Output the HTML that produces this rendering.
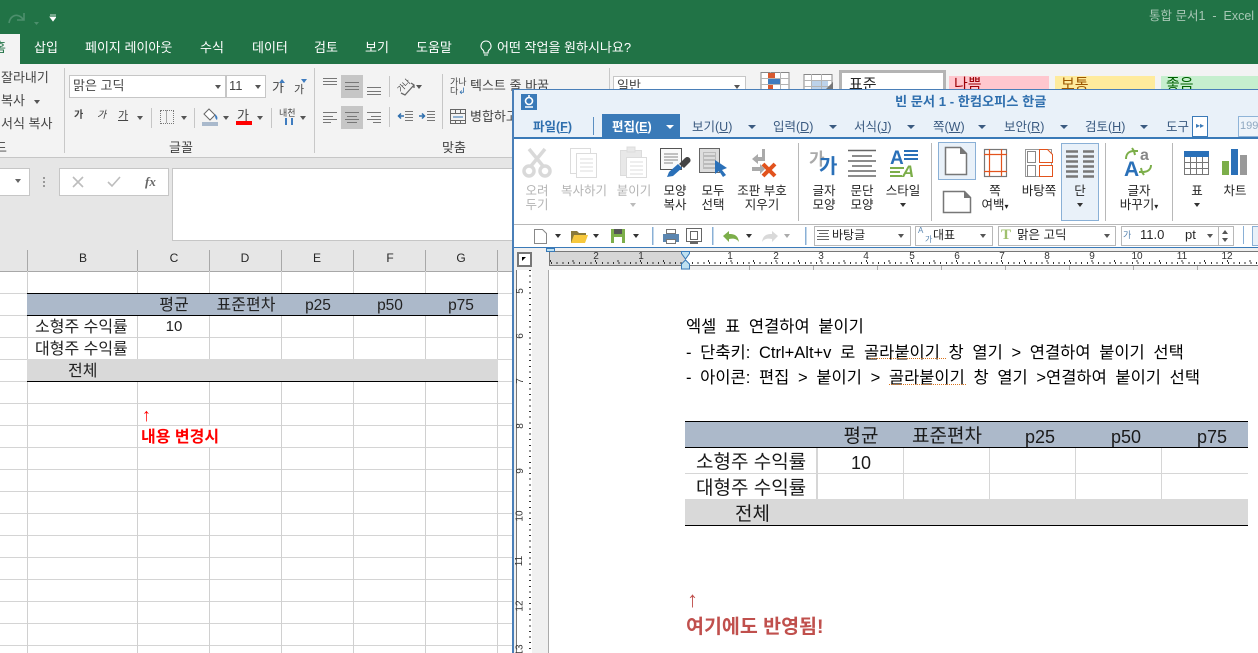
<!DOCTYPE html>
<html lang="ko"><head><meta charset="utf-8"><title>통합 문서1 - Excel</title>
<style>
html,body{margin:0;padding:0;background:#fff}
#p{position:relative;width:1258px;height:653px;overflow:hidden;font-family:"Liberation Sans","Noto Sans CJK KR",sans-serif;font-size:13px;color:#333}
#p div,#p span,#p svg{position:absolute}
#p span span{position:static}
.t{white-space:nowrap;line-height:16px}
.c{transform:translateX(-50%);text-align:center}
.l{color:#444}
.w{color:#fff;font-size:13px}
.g{color:#b4b4b4;font-size:12.500px}
.m{color:#3a5a80;font-size:12.500px}
.b{color:#2f6fae}
.d{color:#262626;font-size:12.500px}
.s{color:#444;font-size:12.500px}
.tri{width:0;height:0;border-left:3.5px solid transparent;border-right:3.5px solid transparent;border-top:4px solid #555}
.tb{width:0;height:0;border-left:4px solid transparent;border-right:4px solid transparent;border-top:4px solid #3a5a80}
.dl{color:#000;font-size:16.500px;word-spacing:4.100px;line-height:20px}
.h{color:#222;font-size:16px;line-height:18px}
.k{color:#1a1a1a;font-size:19px;line-height:22px}
.r{font-size:10px;color:#333;line-height:10px}
</style></head><body><div id="p">

<!-- EXCEL -->
<div style="left:0;top:0;width:1258px;height:64px;background:#217346"></div>
<svg style="left:6px;top:8px" width="50" height="20"><path d="M3 15c1-6 6-10 12-6l3 3M18 5v7h-7" fill="none" stroke="#4d8f6d" stroke-width="1.600"/><path d="M28 14h5l-2.500 3z" fill="#4d8f6d"/><path d="M44 7h6M44 9h6l-3 4z" fill="#fff" stroke="#fff" stroke-width=".8"/></svg>
<span class="t" style="left:1149px;top:8px;color:#a7c7b5;font-size:12.500px">통합 문서1&nbsp; - &nbsp;Excel</span>
<div style="left:0;top:34px;width:20px;height:30px;background:#f3f3f3"></div>
<span class="t" style="left:-6px;top:40px;color:#217346;font-size:13px">홈</span>
<span class="t w" style="left:34px;top:40px">삽입</span>
<span class="t w" style="left:85px;top:40px">페이지 레이아웃</span>
<span class="t w" style="left:200px;top:40px">수식</span>
<span class="t w" style="left:252px;top:40px">데이터</span>
<span class="t w" style="left:314px;top:40px">검토</span>
<span class="t w" style="left:365px;top:40px">보기</span>
<span class="t w" style="left:416px;top:40px">도움말</span>
<svg style="left:479px;top:40px" width="14" height="17"><path d="M7 1a5 5 0 0 0-3 9c.7.6 1 1.400 1 3h4c0-1.600.3-2.400 1-3A5 5 0 0 0 7 1zM5 15h4" fill="none" stroke="#fff" stroke-width="1.100"/></svg>
<span class="t w" style="left:497px;top:40px">어떤 작업을 원하시나요?</span>

<div style="left:0;top:64px;width:1258px;height:93px;background:#f3f3f3;border-bottom:1px solid #c6c6c6"></div>
<div style="left:64px;top:68px;width:1px;height:85px;background:#c8c8c8"></div>
<div style="left:314px;top:68px;width:1px;height:85px;background:#c8c8c8"></div>
<div style="left:609px;top:68px;width:1px;height:85px;background:#c8c8c8"></div>
<span class="t l" style="left:1px;top:70px">잘라내기</span>
<span class="t l" style="left:1px;top:93px">복사</span><div class="tri" style="left:34px;top:100px"></div>
<span class="t l" style="left:1px;top:116px">서식 복사</span>
<span class="t l" style="left:-5px;top:140px">드</span>
<span class="t l" style="left:169px;top:140px">글꼴</span>
<span class="t l" style="left:442px;top:140px">맞춤</span>
<div style="left:69px;top:75px;width:155px;height:21px;background:#fff;border:1px solid #c6c6c6"></div>
<div style="left:226px;top:75px;width:38px;height:21px;background:#fff;border:1px solid #c6c6c6"></div>
<span class="t l" style="left:73px;top:78px">맑은 고딕</span>
<span class="t l" style="left:229px;top:78px">11</span>
<div class="tri" style="left:215px;top:85px"></div><div class="tri" style="left:255px;top:85px"></div>
<span class="t l" style="left:272px;top:80px;font-size:13px">가</span><span class="t l" style="left:294px;top:82px;font-size:11px">가</span>
<div class="tri" style="left:279px;top:79px;transform:rotate(180deg);border-top-color:#3f7cbf"></div>
<div class="tri" style="left:301px;top:79px;border-top-color:#3f7cbf"></div>
<span class="t l" style="left:74px;top:108px;font-size:10px;font-weight:700">가</span>
<span class="t l" style="left:97px;top:108px;font-size:10px;font-style:italic">가</span>
<span class="t l" style="left:118px;top:108px;font-size:11px;text-decoration:underline">가</span>
<div class="tri" style="left:137px;top:116px"></div>
<div style="left:151px;top:108px;width:1px;height:20px;background:#c6c6c6"></div>
<div style="left:160px;top:110px;width:12px;height:12px;border:1px dotted #777"></div>
<div style="left:166px;top:110px;width:1px;height:13px;background:#aaa"></div>
<div class="tri" style="left:181px;top:116px"></div>
<div style="left:194px;top:108px;width:1px;height:20px;background:#c6c6c6"></div>
<svg style="left:201px;top:108px" width="18" height="18"><path d="M8 1l6 6-5 5-6-6z" fill="#fff" stroke="#666"/><path d="M14 6c2 2 3 3 2 6-2-1-2-4-2-6z" fill="#3f7cbf"/><rect x="1" y="14" width="16" height="4" fill="#a9b9cc"/></svg>
<div class="tri" style="left:223px;top:116px"></div>
<span class="t l" style="left:237px;top:108px;font-size:13px">가</span>
<div style="left:236px;top:121px;width:16px;height:4px;background:#f00"></div>
<div class="tri" style="left:257px;top:116px"></div>
<div style="left:271px;top:108px;width:1px;height:20px;background:#c6c6c6"></div>
<span class="t l" style="left:279px;top:108px;font-size:9px;line-height:10px">내천</span>
<div style="left:285px;top:118px;width:8px;height:7px;border-left:2px solid #3f7cbf;border-right:2px solid #3f7cbf;box-sizing:border-box"></div>
<div class="tri" style="left:300px;top:116px"></div>

<div style="left:341px;top:75px;width:22px;height:23px;background:#c6c6c6"></div>
<div style="left:341px;top:106px;width:22px;height:23px;background:#c6c6c6"></div>
<svg style="left:322px;top:74px" width="64" height="52" fill="none" stroke="#777"><path d="M1 4.500h14M1 7.500h14M1 10.500h14M23 8.500h14M23 12.500h14M23 15.500h14M45 13.500h14M45 17.500h14M45 20.500h14M1 38.500h14M1 42.500h10M1 45.500h14M1 48.500h8M23 38.500h14M25 42.500h10M23 45.500h14M25 48.500h10M45 38.500h14M49 42.500h10M45 45.500h14M51 48.500h8"/></svg>
<div style="left:389px;top:76px;width:1px;height:21px;background:#c6c6c6"></div>
<div style="left:389px;top:107px;width:1px;height:20px;background:#c6c6c6"></div>
<div style="left:442px;top:74px;width:1px;height:55px;background:#c6c6c6"></div>
<span class="t l" style="left:397px;top:81px;font-size:8px;line-height:10px;transform:rotate(-45deg)">가나</span>
<svg style="left:396px;top:77px" width="20" height="20"><path d="M5 16l4 2L18 8M15 6l3 2 0 3" stroke="#666" stroke-width="1.300" fill="none"/></svg>
<div class="tri" style="left:416px;top:85px"></div>
<svg style="left:397px;top:110px" width="40" height="13"><path d="M8 1.500h8M8 4.500h8M8 7.500h8M8 10.500h8M30 1.500h8M30 4.500h8M30 7.500h8M30 10.500h8M0 .5" stroke="#777"/><path d="M7 6H1M4 3.500L1.500 6 4 8.500M22 6h6M25 3.500L27.500 6 25 8.500" stroke="#2f6fae" stroke-width="1.500" fill="none"/></svg>
<span class="t l" style="left:450px;top:78px;font-size:9px;line-height:9px">가나<br>다<span style="color:#2f6fae">↲</span></span>
<span class="t l" style="left:470px;top:78px">텍스트 줄 바꿈</span>
<svg style="left:450px;top:109px" width="16" height="15" fill="none" stroke="#666"><rect x=".5" y=".5" width="15" height="14"/><path d="M1 4.500h14M1 11.500h14M5.500 .5v4M10.500 .5v4M5.500 11v4M10.500 11v4"/><path d="M3 8h10" stroke="#2f6fae"/></svg>
<span class="t l" style="left:470px;top:109px">병합하고 가운데 맞춤</span>

<div style="left:613px;top:76px;width:131px;height:22px;background:#fff;border:1px solid #c6c6c6"></div>
<span class="t l" style="left:617px;top:78px">일반</span><div class="tri" style="left:734px;top:85px"></div>
<svg style="left:760px;top:70px" width="76" height="20" fill="none"><rect x="1" y="2.500" width="28" height="20" fill="#fff" stroke="#888"/><path d="M1 8.500h28M1 14.500h28M10.500 2v20M20.500 2v20" stroke="#b4b4b4"/><rect x="8" y="3" width="7" height="5" fill="#d85a30"/><rect x="8" y="9" width="12" height="5" fill="#3f7cbf"/><rect x="8" y="15" width="5" height="5" fill="#d85a30"/><rect x="44" y="4.500" width="28" height="18" fill="#fff" stroke="#888"/><rect x="51" y="10" width="17" height="10" fill="#bcd2ea"/><path d="M44 10.500h28M44 16.500h28M51.500 4v18M61.500 4v18" stroke="#b4b4b4"/><path d="M65 20l8-8v8z" fill="#777"/></svg>
<div style="left:839px;top:70px;width:101px;height:24px;background:#fff;border:3px solid #b4b4b4"></div>
<span class="t d" style="left:849px;top:77px;font-size:15px">표준</span>
<div style="left:949px;top:76px;width:100px;height:20px;background:#ffc7ce"></div>
<span class="t" style="left:954px;top:77px;color:#9c0006;font-size:15px">나쁨</span>
<div style="left:1055px;top:76px;width:100px;height:20px;background:#ffeb9c"></div>
<span class="t" style="left:1061px;top:77px;color:#9c5700;font-size:15px">보통</span>
<div style="left:1161px;top:76px;width:97px;height:20px;background:#c6efce"></div>
<span class="t" style="left:1166px;top:77px;color:#006100;font-size:15px">좋음</span>

<!-- formula bar -->
<div style="left:0;top:158px;width:520px;height:113px;background:#e6e6e6"></div>
<div style="left:-2px;top:168px;width:30px;height:26px;background:#fff;border:1px solid #c6c6c6"></div>
<div class="tri" style="left:15px;top:179px;border-top-color:#666"></div>
<div style="left:43px;top:177px;width:2px;height:10px;border-left:2px dotted #999"></div>
<div style="left:59px;top:168px;width:108px;height:26px;background:#fff;border:1px solid #c6c6c6"></div>
<svg style="left:72px;top:175px" width="50" height="14" fill="none" stroke="#bdbdbd" stroke-width="1.600"><path d="M1 2l10 10M11 2L1 12M36 7l4 4 8-9" /></svg>
<span class="t" style="left:145px;top:174px;font-family:'Liberation Serif',serif;font-style:italic;font-weight:700;font-size:13px;color:#666">fx</span>
<div style="left:172px;top:168px;width:348px;height:71px;background:#fff;border:1px solid #c6c6c6"></div>

<!-- grid -->
<div style="left:0;top:250px;width:512px;height:21px;background:#e6e6e6;border-bottom:1px solid #a8a8a8"></div>
<div style="left:0;top:272px;width:512px;height:381px;background-color:#fff;background-image:repeating-linear-gradient(to bottom,transparent 0,transparent 21px,#d4d4d4 21px,#d4d4d4 22px)"></div>
<div style="left:27px;top:250px;width:1px;height:403px;background:#d0d0d0"></div>
<div style="left:137px;top:250px;width:1px;height:403px;background:#d0d0d0"></div>
<div style="left:209px;top:250px;width:1px;height:403px;background:#d0d0d0"></div>
<div style="left:281px;top:250px;width:1px;height:403px;background:#d0d0d0"></div>
<div style="left:353px;top:250px;width:1px;height:403px;background:#d0d0d0"></div>
<div style="left:425px;top:250px;width:1px;height:403px;background:#d0d0d0"></div>
<div style="left:497px;top:250px;width:1px;height:403px;background:#d0d0d0"></div>
<div style="left:27px;top:250px;width:471px;height:21px;background-image:linear-gradient(#a8a8a8,#a8a8a8),linear-gradient(#a8a8a8,#a8a8a8),linear-gradient(#a8a8a8,#a8a8a8),linear-gradient(#a8a8a8,#a8a8a8),linear-gradient(#a8a8a8,#a8a8a8),linear-gradient(#a8a8a8,#a8a8a8),linear-gradient(#a8a8a8,#a8a8a8);background-size:1px 21px;background-repeat:no-repeat;background-position:0 0,110px 0,182px 0,254px 0,326px 0,398px 0,470px 0"></div>
<span class="t c d" style="left:83px;top:250px;font-size:12px">B</span><span class="t c d" style="left:174px;top:250px;font-size:12px">C</span><span class="t c d" style="left:245px;top:250px;font-size:12px">D</span><span class="t c d" style="left:317px;top:250px;font-size:12px">E</span><span class="t c d" style="left:390px;top:250px;font-size:12px">F</span><span class="t c d" style="left:461px;top:250px;font-size:12px">G</span>
<div style="left:27px;top:293px;width:471px;height:23px;background:#acb9ca;border-top:1px solid #000;border-bottom:1px solid #000;box-sizing:border-box"></div>
<div style="left:27px;top:359px;width:471px;height:23px;background:#d9d9d9;border-bottom:1px solid #000;box-sizing:border-box"></div>
<div style="left:138px;top:426px;width:72px;height:21px;background:#fff"></div>
<span class="t c h" style="left:174px;top:297px">평균</span><span class="t c h" style="left:246px;top:297px">표준편차</span><span class="t c h" style="left:318px;top:297px;font-size:15.500px">p25</span><span class="t c h" style="left:390px;top:297px;font-size:15.500px">p50</span><span class="t c h" style="left:461px;top:297px;font-size:15.500px">p75</span>
<span class="t h" style="left:35px;top:319px">소형주 수익률</span><span class="t c h" style="left:174px;top:318px;font-size:15px">10</span>
<span class="t h" style="left:35px;top:341px">대형주 수익률</span>
<span class="t h" style="left:68px;top:363px">전체</span>
<span class="t" style="left:142px;top:405px;color:#f00;font-size:18px;line-height:20px">↑</span>
<span class="t" style="left:141px;top:429px;color:#f00;font-size:16px;font-weight:700;line-height:18px">내용 변경시</span>

<!-- HANCOM WINDOW -->
<div style="left:512px;top:89px;width:746px;height:564px;background:#fff;border-left:2px solid #4a7fb8;border-top:1px solid #4a7fb8;box-sizing:border-box"></div>
<div style="left:514px;top:90px;width:744px;height:49px;background:#e9f1f9;border-bottom:2px solid #3a7ab8;box-sizing:border-box"></div>
<svg style="left:521px;top:94px" width="16" height="16"><rect width="16" height="16" fill="#3a7ab8"/><circle cx="8" cy="7" r="3.500" fill="none" stroke="#fff" stroke-width="1.600"/><path d="M4 13h8M8 1v2" stroke="#fff" stroke-width="1.600"/></svg>
<span class="t b" style="left:895px;top:94px;font-weight:700;font-size:13.200px">빈 문서 1 - 한컴오피스 한글</span>
<span class="t b" style="left:533px;top:119px;font-weight:700;font-size:12.500px">파일(<u>F</u>)</span>
<div style="left:593px;top:117px;width:1px;height:18px;background:#5b8fc2"></div>
<div style="left:602px;top:114px;width:78px;height:24px;background:#3a7ab8"></div>
<span class="t" style="left:612px;top:119px;color:#fff;font-weight:700;font-size:12.500px">편집(<u>E</u>)</span>
<div class="tb" style="left:666px;top:125px;border-top-color:#fff"></div>
<span class="t m" style="left:692px;top:119px">보기(<u>U</u>)</span><div class="tb" style="left:748px;top:125px"></div>
<span class="t m" style="left:773px;top:119px">입력(<u>D</u>)</span><div class="tb" style="left:829px;top:125px"></div>
<span class="t m" style="left:854px;top:119px">서식(<u>J</u>)</span><div class="tb" style="left:907px;top:125px"></div>
<span class="t m" style="left:933px;top:119px">쪽(<u>W</u>)</span><div class="tb" style="left:978px;top:125px"></div>
<span class="t m" style="left:1004px;top:119px">보안(<u>R</u>)</span><div class="tb" style="left:1060px;top:125px"></div>
<span class="t m" style="left:1085px;top:119px">검토(<u>H</u>)</span><div class="tb" style="left:1140px;top:125px"></div>
<span class="t m" style="left:1166px;top:119px">도구</span>
<div style="left:1192px;top:116px;width:14px;height:19px;background:#fff;border:1px solid #3a7ab8;color:#3a7ab8;font-size:8px;line-height:17px;text-align:center">▸▸</div>
<div style="left:1238px;top:116px;width:20px;height:19px;border:1px solid #8fb4d8;background:#eef4fa;color:#8fa8c0;font-size:11px;line-height:19px;padding-left:1px;overflow:hidden">199</div>

<!-- ribbon icons -->
<svg style="left:514px;top:140px" width="744" height="84">
<g fill="none" stroke="#d9d9d9" stroke-width="3.500"><path d="M15 9l14 17M31 9L17 26"/><circle cx="15" cy="31" r="5"/><circle cx="31" cy="31" r="5"/></g>
<g fill="#fff" stroke="#dcdcdc"><rect x="56.500" y="8.500" width="20" height="25"/><rect x="62.500" y="13.500" width="20" height="24"/><path d="M66 19h13M66 23h13M66 27h13M66 31h13" /></g>
<g fill="#e8e8e8" stroke="#dcdcdc"><rect x="106.500" y="10.500" width="21" height="25"/><rect x="113" y="7" width="8" height="5"/><rect x="112.500" y="17.500" width="20" height="20" fill="#fff"/><path d="M116 22h13M116 26h13M116 30h13M116 34h13"/></g>
<rect x="146.500" y="8.500" width="21" height="21" fill="#fafafa" stroke="#555"/><path d="M150 14h14M150 17h14M150 20h14M150 23h9" stroke="#888"/>
<path d="M153 37l2-5 9-8 4 4-9 8z" fill="#2a70b8"/><path d="M165 24l6-6c3-3 7 1 5 4l-6 6z" fill="#444"/>
<rect x="185.500" y="8.500" width="20" height="24" fill="#ddd" stroke="#666"/><rect x="189" y="12" width="13" height="17" fill="#bbb"/><path d="M190 14h11M190 18h11M190 22h11M190 26h11" stroke="#fff"/>
<path d="M201 20v14l4-3 4 6 3-2-4-5 5-2z" fill="#2a70b8"/>
<g fill="#aaa"><path d="M248 9h3v12h-7v3l-6-5 6-5v3h4zM238 27h8v-3l5 5-5 5v-3h-8z"/></g>
<path d="M249 24l12 12m0-12l-12 12" stroke="#e2531d" stroke-width="4"/>
<rect x="284" y="3" width="1" height="78" fill="#b8b8b8"/>
<text x="295" y="25" font-size="17" fill="#aaa" font-weight="700" font-family="Noto Sans CJK KR">가</text>
<text x="305" y="33" font-size="20" fill="#2a70b8" font-weight="700" font-family="Noto Sans CJK KR">가</text>
<path d="M334 10.500h28M338 16h20M334 21h28M338 26h20M334 31h28M334 36h28" stroke="#666" stroke-width="1.500"/>
<text x="376" y="24" font-size="19" fill="#2a70b8" font-weight="700" font-family="Liberation Sans">A</text>
<path d="M390 11h14M390 15h14M390 19h14" stroke="#2a70b8" stroke-width="2"/>
<path d="M376 28h14M376 32h10M376 36h12" stroke="#7cae4a" stroke-width="2"/>
<text x="388" y="37" font-size="17" fill="#7cae4a" font-weight="700" font-style="italic" font-family="Liberation Sans">A</text>
<rect x="417" y="3" width="1" height="78" fill="#b8b8b8"/>
<rect x="424.500" y="2.500" width="37" height="37" fill="#e9f1f9" stroke="#8ab0d6"/>
<path d="M431.500 7.500h15l6 6v21h-21z" fill="#fff" stroke="#777" stroke-width="1.500"/><path d="M446 7l7 7h-7z" fill="#777"/>
<path d="M429.500 51.500h21l6 6v15h-27z" fill="#fff" stroke="#777" stroke-width="1.500"/><path d="M450 51l7 7h-7z" fill="#777"/>
<rect x="470.500" y="9.500" width="22" height="27" fill="#fff" stroke="#777" stroke-width="1.200"/><path d="M470 14.500h23M470 31.500h23M475.500 9v27M487.500 9v27" stroke="#e2531d" stroke-width="1.200"/>
<path d="M511.500 9.500h26v27h-26z" fill="#fff" stroke="#999"/><path d="M513.500 11.500h8v11h-8zM513.500 25.500h8v11h-8z" fill="none" stroke="#888"/><path d="M525.500 9.500h8l5 5v8h-13zM525.500 25.500h13v11h-13z" fill="#fff" stroke="#e2531d"/>
<rect x="547.500" y="3.500" width="37" height="77" fill="#e9f1f9" stroke="#8ab0d6"/>
<path d="M552 11.500h12M569 11.500h11M552 16.500h12M569 16.500h11M552 21.500h12M569 21.500h11M552 26.500h12M569 26.500h11M552 31.500h12M569 31.500h11M552 36.500h12M569 36.500h11" stroke="#777" stroke-width="2.500"/>
<rect x="591" y="3" width="1" height="78" fill="#b8b8b8"/>
<text x="610" y="36" font-size="21" fill="#2a70b8" font-weight="700" font-family="Liberation Sans">A</text>
<text x="626" y="20" font-size="16" fill="#888" font-weight="700" font-family="Liberation Sans">a</text>
<path d="M612 19c0-5 3-8 8-8l-2-3M624 11l-4 0 1 4M637 25c0 5-4 7-9 7l2 3M625 32l3 0-1-4" fill="none" stroke="#7cae4a" stroke-width="2"/>
<rect x="658" y="3" width="1" height="78" fill="#b8b8b8"/>
<rect x="670.500" y="11.500" width="24" height="23" fill="#fff" stroke="#777"/><rect x="670" y="11" width="25" height="6" fill="#2a70b8"/><path d="M670 22.500h25M670 28.500h25M676.500 17v18M682.500 17v18M688.500 17v18" stroke="#777"/>
<rect x="708" y="21" width="7" height="14" fill="#7cae4a"/><rect x="717" y="9" width="7" height="26" fill="#2a70b8"/><rect x="726" y="15" width="7" height="20" fill="#999"/>
</svg>
<div style="left:514px;top:224px;width:744px;height:1px;background:#b8b8b8"></div>
<span class="t c g" style="left:537px;top:184px;line-height:14px">오려<br>두기</span>
<span class="t c g" style="left:584px;top:184px;line-height:14px">복사하기</span>
<span class="t c g" style="left:634px;top:184px;line-height:14px">붙이기</span><div class="tri" style="left:630px;top:203px;border-top-color:#bbb"></div>
<span class="t c d" style="left:675px;top:184px;line-height:14px">모양<br>복사</span>
<span class="t c d" style="left:713px;top:184px;line-height:14px">모두<br>선택</span>
<span class="t c d" style="left:762px;top:184px;line-height:14px">조판 부호<br>지우기</span>
<span class="t c d" style="left:824px;top:184px;line-height:14px">글자<br>모양</span>
<span class="t c d" style="left:862px;top:184px;line-height:14px">문단<br>모양</span>
<span class="t c d" style="left:903px;top:184px;line-height:14px">스타일</span><div class="tri" style="left:900px;top:203px;border-top-color:#333"></div>
<span class="t c d" style="left:995px;top:184px;line-height:14px">쪽<br>여백<span style="font-size:8px">▾</span></span>
<span class="t c d" style="left:1039px;top:184px;line-height:14px">바탕쪽</span>
<span class="t c d" style="left:1080px;top:184px;line-height:14px">단</span><div class="tri" style="left:1077px;top:203px;border-top-color:#333"></div>
<span class="t c d" style="left:1139px;top:184px;line-height:14px">글자<br>바꾸기<span style="font-size:8px">▾</span></span>
<span class="t c d" style="left:1197px;top:184px;line-height:14px">표</span><div class="tri" style="left:1194px;top:203px;border-top-color:#333"></div>
<span class="t c d" style="left:1235px;top:184px;line-height:14px">차트</span>

<!-- toolbar -->
<svg style="left:514px;top:225px" width="380" height="22">
<path d="M20.500 4.500h8l4 4v10h-12z" fill="#fff" stroke="#888"/><path d="M41 9h6l-3 4z" fill="#333"/>
<path d="M57 6h6l2 2h7v3H61l-2 7h-2z" fill="#8a7a3a"/><path d="M60 10h14l-3 8H57z" fill="#f7c83c"/>
<path d="M79 9h6l-3 4z" fill="#333"/>
<rect x="97" y="4" width="14" height="14" fill="#7cae4a"/><rect x="100" y="4" width="8" height="5" fill="#555"/><rect x="100" y="12" width="8" height="6" fill="#fff"/>
<path d="M119 9h6l-3 4z" fill="#333"/>
<rect x="138" y="2" width="1.500" height="18" fill="#8ab0d6"/>
<rect x="149" y="9" width="16" height="8" fill="#5b86b0"/><rect x="152.500" y="4.500" width="9" height="4" fill="#fff" stroke="#777"/><rect x="152.500" y="14.500" width="9" height="4" fill="#fff" stroke="#777"/>
<rect x="172.500" y="3.500" width="15" height="13" fill="#fff" stroke="#666"/><rect x="176.500" y="6.500" width="7" height="8" fill="#fff" stroke="#666"/><rect x="176" y="17" width="8" height="2" fill="#666"/>
<rect x="198" y="2" width="1.500" height="18" fill="#8ab0d6"/>
<path d="M209 11l6-5v3c5 0 9 1 10 8-2-3-5-4-10-3v3z" fill="#7cae4a"/><path d="M232 9h6l-3 4z" fill="#333"/>
<path d="M264 11l-6-5v3c-5 0-9 1-10 8 2-3 5-4 10-3v3z" fill="#d9d9d9"/><path d="M270 9h6l-3 4z" fill="#aaa"/>
<rect x="291" y="2" width="1.500" height="18" fill="#8ab0d6"/>
</svg>
<div style="left:514px;top:247px;width:744px;height:1px;background:#3a7ab8"></div>
<div style="left:814px;top:226px;width:95px;height:18px;border:1px solid #b8b8b8;background:#fff"></div>
<svg style="left:817px;top:229px" width="13" height="13"><path d="M0 1.500h12M2 4.500h9M0 7.500h12M0 10.500h12" stroke="#666"/></svg>
<span class="t d" style="left:832px;top:227px;font-size:12px">바탕글</span><div class="tri" style="left:898px;top:234px"></div>
<div style="left:915px;top:226px;width:76px;height:18px;border:1px solid #b8b8b8;background:#fff"></div>
<span class="t d" style="left:933px;top:227px;font-size:12px">대표</span><div class="tri" style="left:980px;top:234px"></div>
<span class="t" style="left:918px;top:226px;color:#5b86b0;font-size:8px;line-height:9px">A<br><span style="margin-left:7px">가</span></span>
<div style="left:998px;top:226px;width:116px;height:18px;border:1px solid #b8b8b8;background:#fff"></div>
<span class="t" style="left:1001px;top:227px;color:#9fc06e;font-family:'Liberation Serif',serif;font-weight:700;font-size:15px">T</span>
<span class="t d" style="left:1017px;top:227px;font-size:12.500px">맑은 고딕</span><div class="tri" style="left:1104px;top:234px"></div>
<div style="left:1121px;top:226px;width:111px;height:18px;border:1px solid #b8b8b8;background:#fff"></div>
<div style="left:1218px;top:226px;width:1px;height:19px;background:#b8b8b8"></div>
<span class="t" style="left:1123px;top:227px;color:#5b86b0;font-size:9px">가</span>
<span class="t d" style="left:1140px;top:227px;font-size:13px">11.0</span><span class="t d" style="left:1185px;top:227px;font-size:13px">pt</span><div class="tri" style="left:1207px;top:234px"></div>
<div class="tri" style="left:1222px;top:230px;transform:rotate(180deg)"></div><div class="tri" style="left:1222px;top:238px"></div>
<div style="left:1243px;top:226px;width:1px;height:18px;background:#8ab0d6"></div>
<div style="left:1252px;top:226px;width:6px;height:18px;background:#e9f1f9;border:1px solid #8ab0d6"></div>

<!-- ruler -->
<div style="left:514px;top:248px;width:744px;height:405px;background:#f0f0f0"></div>
<div style="left:517px;top:252px;width:11px;height:11px;background:#fff;border:2px solid #777"></div>
<div style="left:522px;top:257px;width:0;height:0;border-top:4px solid #000;border-right:4px solid transparent"></div>
<div style="left:549px;top:251px;width:709px;height:15px;background:#fff;border-top:1px solid #777;border-bottom:1px solid #777;box-sizing:border-box"></div>
<div style="left:549px;top:251px;width:136px;height:15px;background:#d6d6d6;border:1px solid #777;border-right:0;box-sizing:border-box"></div>
<div style="left:551px;top:262px;width:707px;height:2px;background:repeating-linear-gradient(to right,#333 0,#333 1px,transparent 1px,transparent 5.640px)"></div>
<div style="left:550px;top:260px;width:708px;height:2px;background:repeating-linear-gradient(to right,#333 0,#333 1px,transparent 1px,transparent 22.560px)"></div>
<div style="left:749px;top:266px;width:509px;height:4px;background:repeating-linear-gradient(to right,#aaa 0,#aaa 1px,transparent 1px,transparent 64px)"></div>
<span class="r c" style="left:596px;top:252px">2</span><span class="r c" style="left:641px;top:252px">1</span><span class="r c" style="left:730px;top:252px">1</span><span class="r c" style="left:776px;top:252px">2</span><span class="r c" style="left:821px;top:252px">3</span><span class="r c" style="left:866px;top:252px">4</span><span class="r c" style="left:912px;top:252px">5</span><span class="r c" style="left:957px;top:252px">6</span><span class="r c" style="left:1002px;top:252px">7</span><span class="r c" style="left:1047px;top:252px">8</span><span class="r c" style="left:1092px;top:252px">9</span><span class="r c" style="left:1137px;top:252px">10</span><span class="r c" style="left:1182px;top:252px">11</span><span class="r c" style="left:1227px;top:252px">12</span>
<svg style="left:680px;top:250px" width="12" height="20"><path d="M1.500 1.500h8v2L5.500 9 1.500 3.500z" fill="#bfe0f0" stroke="#3a7ab8"/><path d="M5.500 10l4 4v5h-8v-5z" fill="#bfe0f0" stroke="#3a7ab8"/></svg>
<div style="left:546px;top:248px;width:7px;height:2px;border:1px solid #3a7ab8;background:#bfe0f0"></div>
<!-- vertical ruler -->
<div style="left:516px;top:270px;width:15px;height:383px;background:#fff;border-left:1px solid #777"></div>
<div style="left:529px;top:270px;width:2px;height:383px;background:repeating-linear-gradient(to bottom,#333 0,#333 1px,transparent 1px,transparent 5.640px)"></div>
<span class="r" style="left:518px;top:286px;transform:rotate(-90deg)">5</span>
<span class="r" style="left:518px;top:331px;transform:rotate(-90deg)">6</span>
<span class="r" style="left:518px;top:376px;transform:rotate(-90deg)">7</span>
<span class="r" style="left:518px;top:421px;transform:rotate(-90deg)">8</span>
<span class="r" style="left:518px;top:466px;transform:rotate(-90deg)">9</span>
<span class="r" style="left:515px;top:511px;transform:rotate(-90deg)">10</span>
<span class="r" style="left:515px;top:556px;transform:rotate(-90deg)">11</span>
<span class="r" style="left:515px;top:601px;transform:rotate(-90deg)">12</span>
<span class="r" style="left:515px;top:645px;transform:rotate(-90deg)">13</span>
<!-- page -->
<div style="left:548px;top:270px;width:710px;height:383px;background:#fff;border-left:1px solid #aaa"></div>

<span class="t dl" style="left:686px;top:317px">엑셀 표 연결하여 붙이기</span>
<span class="t dl" style="left:686px;top:343px">- 단축키: Ctrl+Alt+v 로 골라붙이기 창 열기 &gt; 연결하여 붙이기 선택</span>
<span class="t dl" style="left:686px;top:368px">- 아이콘: 편집 &gt; 붙이기 &gt; 골라붙이기 창 열기 &gt;연결하여 붙이기 선택</span>
<div style="left:871px;top:358px;width:75px;height:1px;border-top:1px dotted #d9731a"></div>
<div style="left:889px;top:384px;width:77px;height:1px;border-top:1px dotted #d9731a"></div>

<div style="left:685px;top:421px;width:563px;height:27px;background:#acb9ca;border-top:1px solid #000;box-sizing:border-box"></div>
<div style="left:685px;top:447px;width:563px;height:1px;background:#000"></div>
<div style="left:685px;top:499px;width:563px;height:27px;background:#d9d9d9;border-bottom:1px solid #000;box-sizing:border-box"></div>
<div style="left:685px;top:473px;width:563px;height:1px;background:#d6d6d6"></div>
<div style="left:816px;top:448px;width:2px;height:51px;background:#d6d6d6"></div>
<div style="left:903px;top:448px;width:1px;height:51px;background:#d6d6d6"></div>
<div style="left:989px;top:448px;width:1px;height:51px;background:#d6d6d6"></div>
<div style="left:1075px;top:448px;width:1px;height:51px;background:#d6d6d6"></div>
<div style="left:1161px;top:448px;width:1px;height:51px;background:#d6d6d6"></div>
<span class="t c k" style="left:861px;top:426px">평균</span><span class="t c k" style="left:947px;top:426px">표준편차</span><span class="t c k" style="left:1040px;top:426px;font-size:18px">p25</span><span class="t c k" style="left:1126px;top:426px;font-size:18px">p50</span><span class="t c k" style="left:1212px;top:426px;font-size:18px">p75</span>
<span class="t k" style="left:696px;top:452px">소형주 수익률</span><span class="t c k" style="left:861px;top:452px;font-size:18px">10</span>
<span class="t k" style="left:696px;top:478px">대형주 수익률</span>
<span class="t k" style="left:735px;top:504px">전체</span>
<span class="t" style="left:687px;top:588px;color:#c0504d;font-size:22px;line-height:24px">↑</span>
<span class="t" style="left:686px;top:615px;color:#c0504d;font-size:19.500px;font-weight:700;line-height:24px">여기에도 반영됨!</span>
</div></body></html>
